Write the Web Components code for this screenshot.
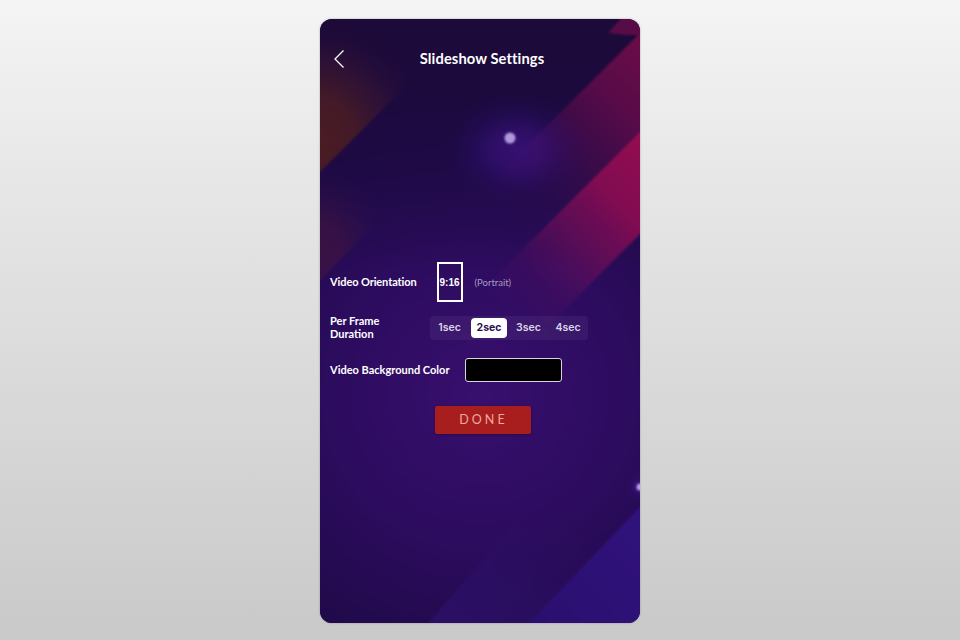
<!DOCTYPE html>
<html lang="en">
<head>
<meta charset="utf-8">
<title>Slideshow Settings</title>
<style>
  html, body { margin: 0; height: 640px; overflow: hidden; }
  body {
    background: linear-gradient(#f4f4f4, #e6e6e6 30%, #c9c9c9);
    font-family: "Lato", "Liberation Sans", sans-serif;
    display: flex;
    justify-content: center;
    align-items: flex-start;
  }
</style>
</head>
<body>

<phone-screen>
  <app-header slot="header">Slideshow Settings</app-header>
  <setting-row label="Video Orientation">
    <orientation-box ratio="9:16" note="(Portrait)"></orientation-box>
  </setting-row>
  <setting-row label="Per Frame Duration" wrap>
    <duration-picker selected="2sec" options="1sec,2sec,3sec,4sec"></duration-picker>
  </setting-row>
  <setting-row label="Video Background Color">
    <color-well color="#000"></color-well>
  </setting-row>
  <done-button>DONE</done-button>
</phone-screen>

<script>
class PhoneScreen extends HTMLElement {
  constructor() {
    super()
    this.attachShadow({ mode: 'open' })
    this.shadowRoot.innerHTML = `
    <style>
      :host {
        display: flex;
        flex-direction: column;
        position: relative;
        width: 320px;
        height: 604px;
        margin-top: 19px;
        border-radius: 12px;
        overflow: hidden;
        background: #1f0b4a;
        color: #fff;
        box-shadow: 0 0 2px rgba(90, 70, 120, .5);
      }
      svg { position: absolute; left: -4px; top: -4px; width: 328px; height: 612px; filter: blur(.8px); }
      .content { position: relative; display: flex; flex-direction: column; flex: 1; }
      .rows { display: flex; flex-direction: column; margin-top: 193px; }
    </style>
    <svg viewBox="-4 -4 328 612" aria-hidden="true">
      <defs>
        <radialGradient id="base" gradientUnits="userSpaceOnUse" cx="160" cy="375" r="300">
          <stop offset="0" stop-color="#380f6e"/>
          <stop offset=".5" stop-color="#2c0c5e"/>
          <stop offset="1" stop-color="#1e0a46"/>
        </radialGradient>
        <linearGradient id="top" gradientUnits="userSpaceOnUse" x1="0" y1="0" x2="0" y2="254">
          <stop offset="0" stop-color="#1c0a38"/>
          <stop offset=".5" stop-color="#1c0a40" stop-opacity=".75"/>
          <stop offset="1" stop-color="#1c0a40" stop-opacity="0"/>
        </linearGradient>
        <linearGradient id="crimson" gradientUnits="userSpaceOnUse" x1="345" y1="139" x2="190" y2="294">
          <stop offset="0" stop-color="#940c50"/>
          <stop offset=".3" stop-color="#860c52" stop-opacity=".95"/>
          <stop offset=".55" stop-color="#740e58" stop-opacity=".65"/>
          <stop offset=".8" stop-color="#640e5e" stop-opacity=".22"/>
          <stop offset="1" stop-color="#5a0e60" stop-opacity="0"/>
        </linearGradient>
        <linearGradient id="wine" gradientUnits="userSpaceOnUse" x1="345" y1="38" x2="185" y2="198">
          <stop offset="0" stop-color="#6c0c48"/>
          <stop offset=".3" stop-color="#620c4a" stop-opacity=".85"/>
          <stop offset=".55" stop-color="#560c4e" stop-opacity=".5"/>
          <stop offset=".8" stop-color="#480e54" stop-opacity=".16"/>
          <stop offset="1" stop-color="#400e56" stop-opacity="0"/>
        </linearGradient>
        <radialGradient id="brown" gradientUnits="userSpaceOnUse" cx="-8" cy="120" r="122">
          <stop offset="0" stop-color="#56201c" stop-opacity=".85"/>
          <stop offset=".35" stop-color="#52201e" stop-opacity=".72"/>
          <stop offset=".65" stop-color="#4a1c28" stop-opacity=".36"/>
          <stop offset=".85" stop-color="#3e1630" stop-opacity=".1"/>
          <stop offset="1" stop-color="#3a1434" stop-opacity="0"/>
        </radialGradient>
        <radialGradient id="brown2" gradientUnits="userSpaceOnUse" cx="-15" cy="232" r="88">
          <stop offset="0" stop-color="#47163c" stop-opacity=".7"/>
          <stop offset=".4" stop-color="#44163e" stop-opacity=".55"/>
          <stop offset=".75" stop-color="#3c1444" stop-opacity=".18"/>
          <stop offset="1" stop-color="#2a0d50" stop-opacity="0"/>
        </radialGradient>
        <linearGradient id="band" gradientUnits="userSpaceOnUse" x1="150" y1="630" x2="240" y2="500">
          <stop offset="0" stop-color="#2c1068" stop-opacity=".85"/>
          <stop offset=".4" stop-color="#2c1068" stop-opacity=".6"/>
          <stop offset=".75" stop-color="#2c1068" stop-opacity=".18"/>
          <stop offset="1" stop-color="#2c1068" stop-opacity="0"/>
        </linearGradient>
        <linearGradient id="blue" gradientUnits="userSpaceOnUse" x1="345" y1="480" x2="195" y2="625">
          <stop offset="0" stop-color="#32137f"/>
          <stop offset="1" stop-color="#290f6c"/>
        </linearGradient>
        <radialGradient id="glow">
          <stop offset="0" stop-color="#47148e" stop-opacity=".6"/>
          <stop offset=".35" stop-color="#42138e" stop-opacity=".45"/>
          <stop offset=".7" stop-color="#34108a" stop-opacity=".15"/>
          <stop offset="1" stop-color="#2a0f70" stop-opacity="0"/>
        </radialGradient>
      </defs>
      <rect x="-4" y="-4" width="328" height="612" fill="url(#base)"/>
      <rect x="-4" y="-4" width="328" height="612" fill="url(#top)"/>
      <polygon points="325,9 140,194 210,232 325,117" fill="url(#wine)"/>
      <polygon points="325,108 140,293 200,335 325,210" fill="url(#crimson)"/>
      <polygon points="325,-5 305,-5 288,14 305,16 325,16" fill="#580c46"/>
      <polygon points="-4,-5 158,-5 -4,157" fill="url(#brown)"/>
      <polygon points="-4,100 124,132 -4,266" fill="url(#brown2)"/>
      <polygon points="103,610 283,406 420,610" fill="url(#band)"/>
      <polygon points="325,483 325,610 203,610" fill="url(#blue)"/>
      <ellipse cx="197" cy="130" rx="72" ry="55" fill="url(#glow)"/>
      <circle cx="190" cy="119" r="5.5" fill="#ae98da"/>
      <circle cx="320" cy="468" r="14" fill="url(#glow)"/>
      <circle cx="320" cy="468" r="3.5" fill="#b5a4e6"/>
    </svg>
    <div class="content">
      <slot name="header"></slot>
      <div class="rows"><slot></slot></div>
    </div>`
  }
}

class AppHeader extends HTMLElement {
  constructor() {
    super()
    this.attachShadow({ mode: 'open' })
    this.shadowRoot.innerHTML = `
    <style>
      :host {
        display: flex;
        align-items: center;
        justify-content: center;
        position: relative;
        height: 20px;
        margin-top: 30px;
        font-size: 14.7px;
        font-weight: 700;
        letter-spacing: .1px;
      }
      svg { position: absolute; left: 13px; top: 0; width: 12px; height: 20px; }
      .title { margin: -3px 0 0 4px; }
    </style>
    <svg viewBox="0 0 12 20" aria-hidden="true"><path d="M10.5 1.5 2 10l8.5 8.5" fill="none" stroke="#fff" stroke-width="1.3"/></svg>
    <span class="title"><slot></slot></span>`
  }
}

class SettingRow extends HTMLElement {
  constructor() {
    super()
    this.attachShadow({ mode: 'open' })
  }
  connectedCallback() {
    const label = this.getAttribute('label')
    const wrap = this.hasAttribute('wrap')
    this.shadowRoot.innerHTML = `
    <style>
      :host {
        display: flex;
        align-items: center;
        padding-left: 10px;
        margin-bottom: 12px;
      }
      :host([wrap]) { margin-bottom: 16px; }
      .label {
        width: ${wrap ? '70px' : 'auto'};
        margin-bottom: 2px;
        font-size: 11px;
        font-weight: 700;
        line-height: 13px;
        white-space: ${wrap ? 'normal' : 'nowrap'};
        flex: none;
      }
      .value { margin-left: ${wrap ? '30px' : '15px'}; }
      :host([label="Video Orientation"]) .label { letter-spacing: -.1px; }
      :host([label="Video Orientation"]) .value { margin-left: 20px; }
    </style>
    <div class="label">${label}</div>
    <div class="value"><slot></slot></div>`
  }
}

class OrientationBox extends HTMLElement {
  constructor() {
    super()
    this.attachShadow({ mode: 'open' })
  }
  connectedCallback() {
    this.shadowRoot.innerHTML = `
    <style>
      :host { display: flex; align-items: center; }
      .box {
        box-sizing: border-box;
        width: 26px;
        height: 40px;
        border: 2px solid #fff;
        display: flex;
        align-items: center;
        justify-content: center;
        font: 700 10px "Liberation Sans", sans-serif;
        white-space: nowrap;
      }
      .note { margin-left: 12px; font-size: 9.5px; color: #a99bc4; }
    </style>
    <div class="box">${this.getAttribute('ratio')}</div>
    <span class="note">${this.getAttribute('note')}</span>`
  }
}

class DurationPicker extends HTMLElement {
  constructor() {
    super()
    this.attachShadow({ mode: 'open' })
  }
  connectedCallback() {
    const selected = this.getAttribute('selected')
    const items = this.getAttribute('options').split(',').map(o =>
      `<span class="opt${o === selected ? ' on' : ''}">${o}</span>`).join('')
    this.shadowRoot.innerHTML = `
    <style>
      :host {
        display: flex;
        align-items: center;
        gap: 3.5px;
        padding: 2px 1.5px;
        border-radius: 4px;
        background: rgba(255, 255, 255, .05);
        font: 600 10.5px "Inter", "Liberation Sans", sans-serif;
      }
      .opt {
        width: 36px;
        height: 20px;
        line-height: 20px;
        text-align: center;
        border-radius: 4px;
        color: #dcd4ea;
      }
      .on { background: #fff; color: #2a1050; font-weight: 700; }
    </style>
    ${items}`
  }
}

class ColorWell extends HTMLElement {
  constructor() {
    super()
    this.attachShadow({ mode: 'open' })
  }
  connectedCallback() {
    this.shadowRoot.innerHTML = `
    <style>
      :host {
        display: block;
        box-sizing: border-box;
        width: 97px;
        height: 24px;
        border: 1px solid #d9d2e6;
        border-radius: 3px;
        background: ${this.getAttribute('color')};
      }
    </style>`
  }
}

class DoneButton extends HTMLElement {
  constructor() {
    super()
    this.attachShadow({ mode: 'open' })
    this.shadowRoot.innerHTML = `
    <style>
      :host {
        display: flex;
        align-items: center;
        justify-content: center;
        align-self: center;
        box-sizing: border-box;
        width: 96px;
        height: 28px;
        margin: 12px 0 0 5px;
        padding: 0 0 2px 2px;
        border-radius: 2px;
        background: #a81e1e;
        color: #eeaa9a;
        font-size: 12.5px;
        letter-spacing: 3.1px;
        box-shadow: 0 1px 3px rgba(0, 0, 0, .3);
      }
    </style>
    <slot></slot>`
  }
}

customElements.define('phone-screen', PhoneScreen)
customElements.define('app-header', AppHeader)
customElements.define('setting-row', SettingRow)
customElements.define('orientation-box', OrientationBox)
customElements.define('duration-picker', DurationPicker)
customElements.define('color-well', ColorWell)
customElements.define('done-button', DoneButton)
</script>
</body>
</html>
